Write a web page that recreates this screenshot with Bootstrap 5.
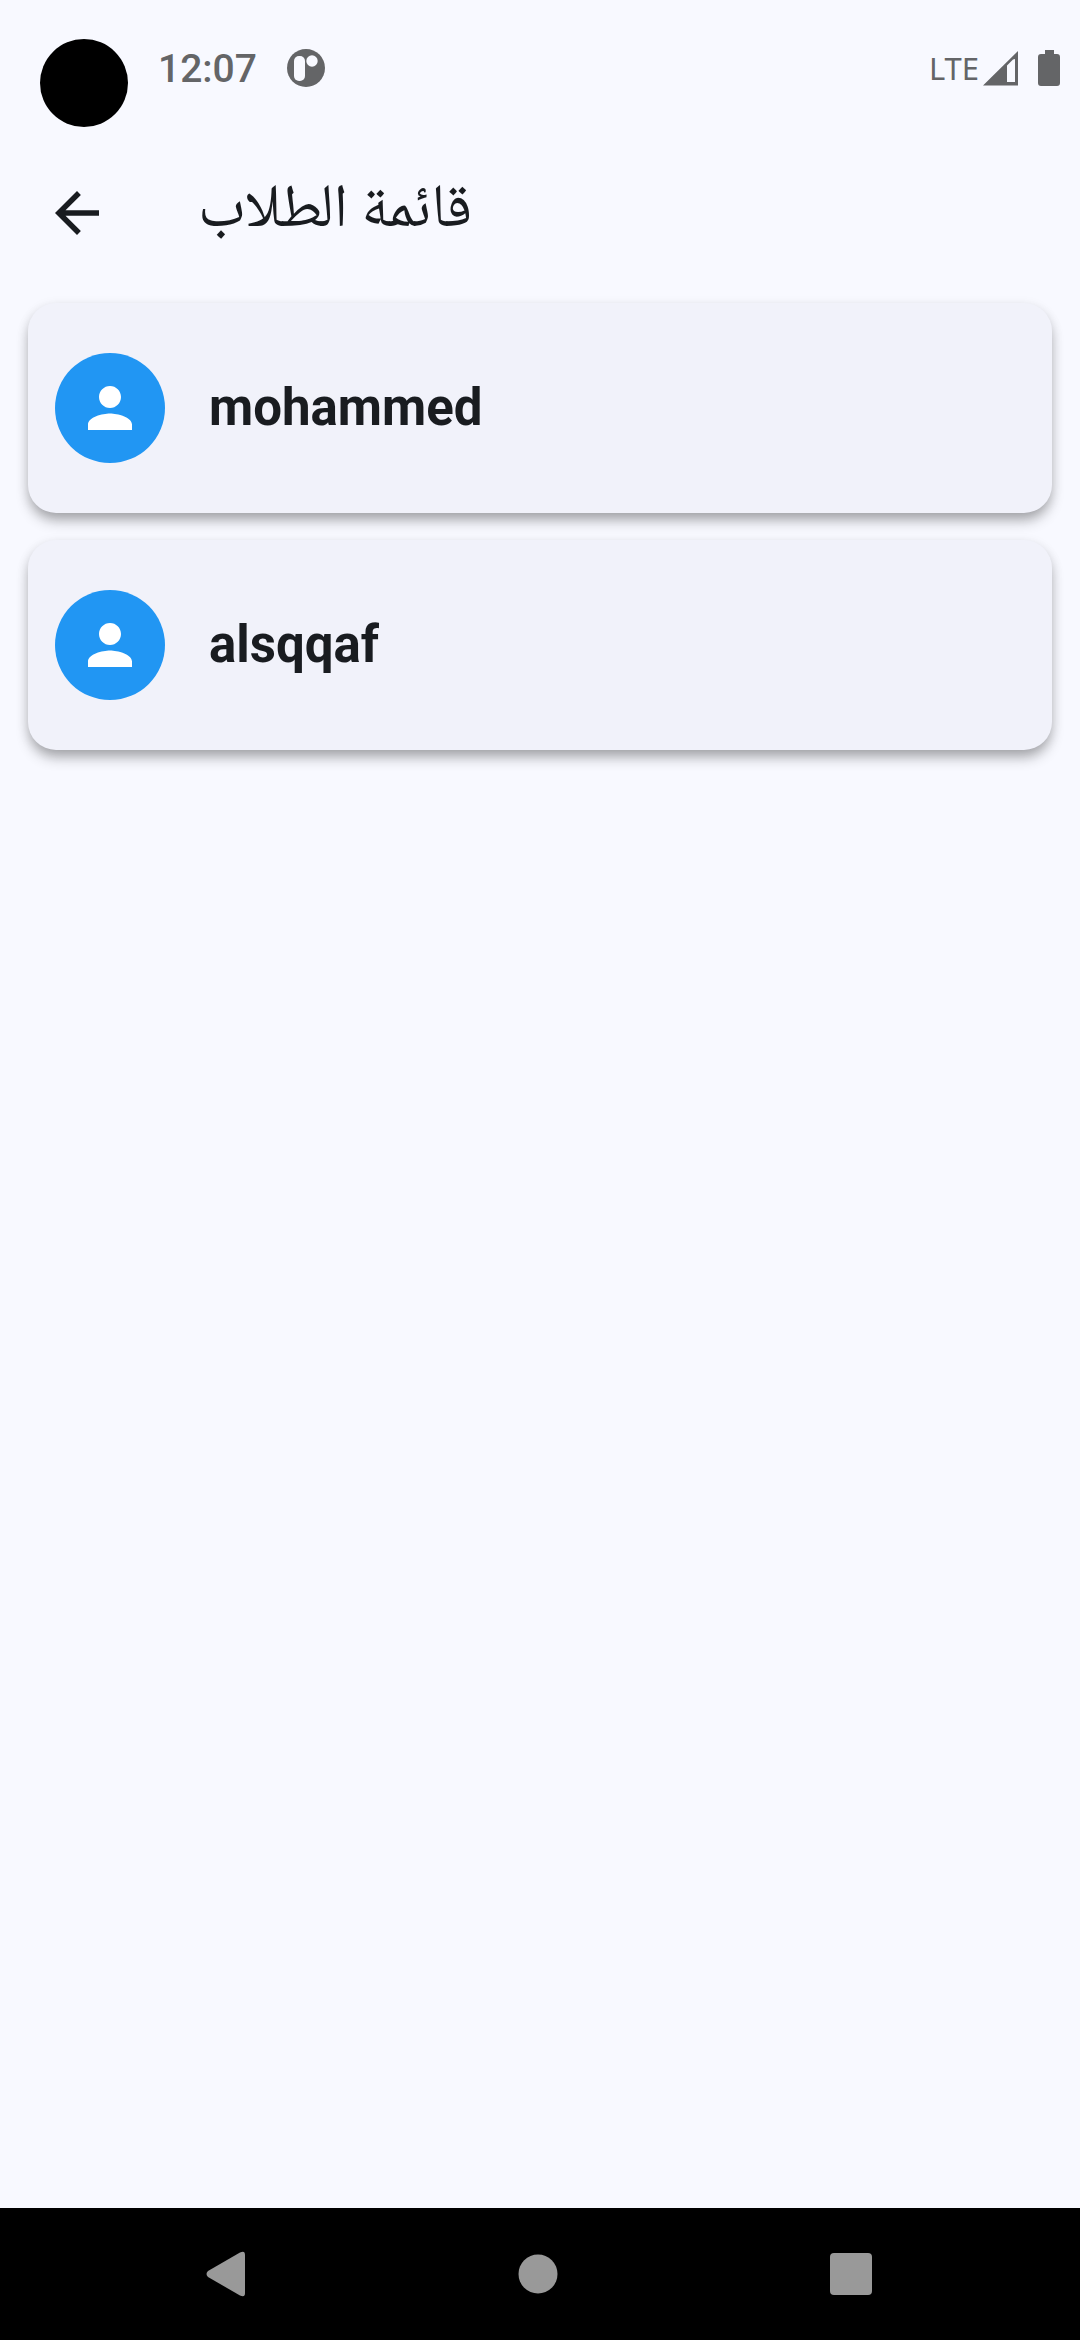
<!DOCTYPE html>
<html lang="ar">
<head>
<meta charset="utf-8">
<meta name="viewport" content="width=device-width, initial-scale=1">
<title>قائمة الطلاب</title>
<link href="https://cdn.jsdelivr.net/npm/bootstrap@5.3.0/dist/css/bootstrap.min.css" rel="stylesheet">
<style>
  body { background: #f8f9ff; color: #191c20; font-family: Roboto, "Noto Sans", "DejaVu Sans", sans-serif; }
  .status-bar { height: 136px; padding: 39px 20px 0 40px; color: #646567; }
  .status-line { height: 58px; }
  .camera { width: 88px; height: 88px; background: #000; }
  .clock { font-size: 39px; line-height: 60px; font-weight: 500; margin-left: 30px; }
  .notice { margin-left: 30px; }
  .network { font-family: "Noto Sans", sans-serif; font-size: 31px; line-height: 58px; margin-right: 4px; }
  .battery { margin-left: 20px; }
  .app-bar { height: 154px; padding: 0 44px; }
  .back { color: inherit; line-height: 0; }
  .app-title { font-family: "Noto Naskh Arabic", "DejaVu Sans", sans-serif; font-size: 61px; line-height: 80px; margin-left: 88px; }
  .students { padding: 13px 28px; gap: 27px; }
  .student { min-height: 210px; padding: 0 27px; gap: 44px; background: #f1f2fa; border-radius: 28px;
    box-shadow: 0 9px 14px -2px rgba(0,0,0,.3), 0 3px 12px rgba(0,0,0,.1); }
  .avatar { width: 110px; height: 110px; background: #2196f3; }
  .student-name { font-size: 51px; line-height: 66px; font-weight: 700; }
  .nav-keys { height: 132px; background: #000; padding: 0 208px 0 206px; }
</style>
<script src="https://cdn.jsdelivr.net/npm/bootstrap@5.3.0/dist/js/bootstrap.bundle.min.js" defer></script>
</head>
<body class="d-flex flex-column min-vh-100">
  <div class="status-bar d-flex align-items-start">
    <span class="camera rounded-circle"></span>
    <time class="clock">12:07</time>
    <span class="notice status-line d-flex align-items-center">
      <svg width="38" height="38" viewBox="0 0 38 38" aria-hidden="true">
        <circle cx="19" cy="19" r="19" fill="#646567"/>
        <rect x="7" y="7" width="11" height="25" rx="5" fill="#f8f9ff"/>
        <circle cx="25" cy="12" r="5.7" fill="#f8f9ff"/>
      </svg>
    </span>
    <span class="status-line d-flex align-items-center ms-auto">
      <span class="network">LTE</span>
      <svg width="35" height="35" viewBox="0 0 35 35" aria-hidden="true">
        <path fill="#646567" fill-rule="evenodd" d="M0 34.500 35 0V34.500ZM24 14.500V31H32V8L30 8.500Z"/>
      </svg>
      <svg class="battery" width="22" height="36" viewBox="0 0 22 36" aria-hidden="true">
        <path fill="#646567" d="M7 0h9v4h3q3 0 3 3v26q0 3-3 3H3q-3 0-3-3V7q0-3 3-3h4z"/>
      </svg>
    </span>
  </div>

  <header class="app-bar d-flex align-items-center">
    <button type="button" class="back btn border-0 p-0" aria-label="رجوع">
      <svg width="66" height="66" viewBox="0 0 24 24" fill="currentColor"><path d="M20 11H7.830l5.590-5.590L12 4l-8 8 8 8 1.410-1.410L7.830 13H20z"/></svg>
    </button>
    <h1 class="app-title fw-normal mb-0" dir="rtl">قائمة الطلاب</h1>
  </header>

  <main class="flex-grow-1">
    <ul class="students list-unstyled d-flex flex-column mb-0">
      <li class="student d-flex align-items-center">
        <span class="avatar rounded-circle d-flex align-items-center justify-content-center flex-shrink-0">
          <svg width="66" height="66" viewBox="0 0 24 24" fill="#fff" aria-hidden="true"><path d="M12 12c2.210 0 4-1.790 4-4s-1.790-4-4-4-4 1.790-4 4 1.790 4 4 4zm0 2c-2.670 0-8 1.340-8 4v2h16v-2c0-2.660-5.330-4-8-4z"/></svg>
        </span>
        <span class="student-name">mohammed</span>
      </li>
      <li class="student d-flex align-items-center">
        <span class="avatar rounded-circle d-flex align-items-center justify-content-center flex-shrink-0">
          <svg width="66" height="66" viewBox="0 0 24 24" fill="#fff" aria-hidden="true"><path d="M12 12c2.210 0 4-1.790 4-4s-1.790-4-4-4-4 1.790-4 4 1.790 4 4 4zm0 2c-2.670 0-8 1.340-8 4v2h16v-2c0-2.660-5.330-4-8-4z"/></svg>
        </span>
        <span class="student-name">alsqqaf</span>
      </li>
    </ul>
  </main>

  <nav class="nav-keys d-flex align-items-center justify-content-between">
    <button type="button" class="btn border-0 p-0 lh-1" aria-label="Back">
      <svg class="d-block" width="40" height="46" viewBox="0 0 40 46"><path fill="#999" d="M2 20 34 1.500Q39-1 39 4V42Q39 47 34 44.500L2 26Q-1 23 2 20Z"/></svg>
    </button>
    <button type="button" class="btn border-0 p-0 lh-1" aria-label="Home">
      <svg class="d-block" width="40" height="40" viewBox="0 0 40 40"><circle cx="20" cy="20" r="19.500" fill="#999"/></svg>
    </button>
    <button type="button" class="btn border-0 p-0 lh-1" aria-label="Recent apps">
      <svg class="d-block" width="42" height="42" viewBox="0 0 42 42"><rect width="42" height="42" rx="4" fill="#999"/></svg>
    </button>
  </nav>
</body>
</html>
